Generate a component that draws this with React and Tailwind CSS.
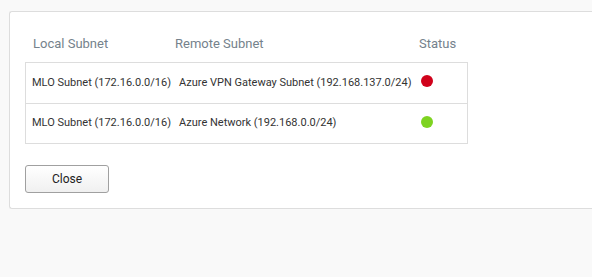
import React from "react";

const rows = [
  {
    local: "MLO Subnet (172.16.0.0/16)",
    remote: "Azure VPN Gateway Subnet (192.168.137.0/24)",
    status: "down",
  },
  {
    local: "MLO Subnet (172.16.0.0/16)",
    remote: "Azure Network (192.168.0.0/24)",
    status: "up",
  },
];

export default function App() {
  return (
    <div
      className="w-[592px] h-[277px] overflow-hidden bg-[#f9f9f9] pt-[11px] pl-[9px]"
      style={{ fontFamily: '"Roboto", "Liberation Sans", sans-serif' }}
    >
      <div className="w-[620px] bg-white border-y border-l border-[#dddddd] rounded-l-[3px] pl-[15px] pt-[22px] pb-[15px]">
        {/* Column headings */}
        <div className="flex h-[19px] items-center text-[13px] text-[#75828c] w-[442px]">
          <div className="w-[150px] pl-[8px]">Local Subnet</div>
          <div className="w-[244px]">Remote Subnet</div>
          <div>Status</div>
        </div>

        {/* Tunnel table */}
        <div className="mt-[9px] w-[443px] border border-[#dddddd] text-[11px] text-[#333333]">
          {rows.map((row, i) => (
            <div
              key={i}
              className={`flex h-[40px] items-center ${i > 0 ? "border-t border-[#dddddd]" : ""}`}
            >
              <div className="w-[153px] pl-[6px] whitespace-nowrap">{row.local}</div>
              <div className="w-[242px] whitespace-nowrap">{row.remote}</div>
              <div className="mb-[4px]">
                <span
                  className={`block w-[12px] h-[12px] rounded-full ${
                    row.status === "up" ? "bg-[#7ed321]" : "bg-[#d0021b]"
                  }`}
                />
              </div>
            </div>
          ))}
        </div>

        {/* Close */}
        <button className="mt-[21px] w-[84px] h-[28px] rounded-[3px] border border-[#a0a0a0] bg-gradient-to-b from-[#ffffff] to-[#f0f0f0] text-[12px] text-[#222222]">
          Close
        </button>
      </div>
    </div>
  );
}
